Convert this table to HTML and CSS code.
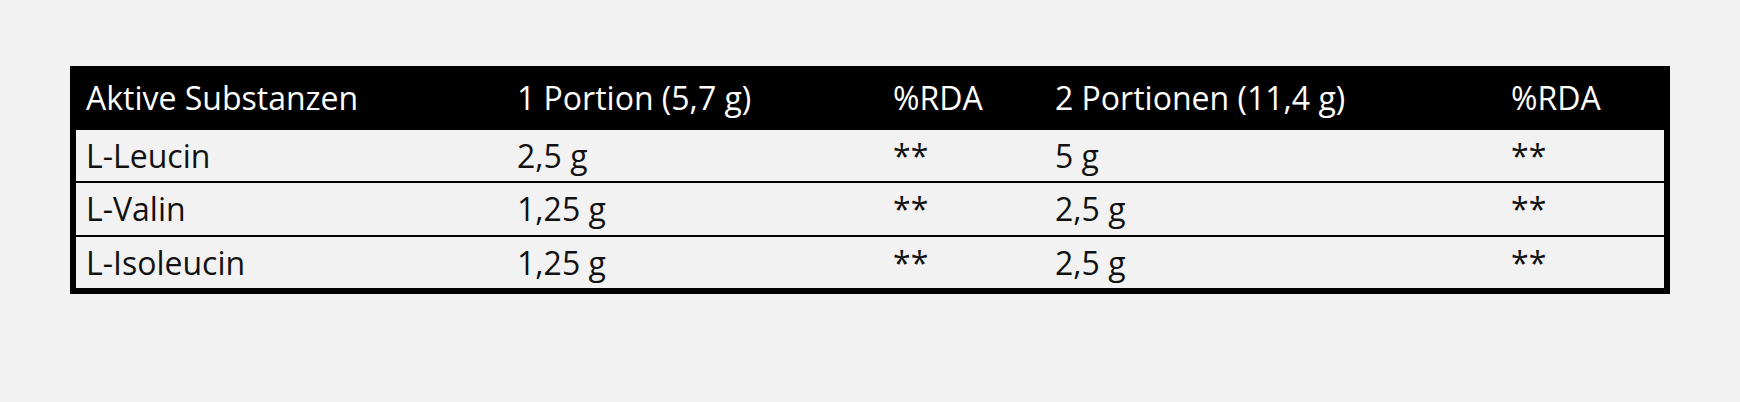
FILE: index.html
```html
<!DOCTYPE html>
<html lang="de">
<head>
<meta charset="utf-8">
<title>Aktive Substanzen</title>
<link rel="stylesheet" href="styles.css">
</head>
<body>
<div class="page">
  <table class="nutri">
    <colgroup>
      <col class="c1"><col class="c2"><col class="c3"><col class="c4"><col class="c5">
    </colgroup>
    <thead>
      <tr>
        <th>Aktive Substanzen</th>
        <th>1 Portion (5,7 g)</th>
        <th>%RDA</th>
        <th>2 Portionen (11,4 g)</th>
        <th>%RDA</th>
      </tr>
    </thead>
    <tbody>
      <tr><td>L-Leucin</td><td>2,5 g</td><td>**</td><td>5 g</td><td>**</td></tr>
      <tr><td>L-Valin</td><td>1,25 g</td><td>**</td><td>2,5 g</td><td>**</td></tr>
      <tr><td>L-Isoleucin</td><td>1,25 g</td><td>**</td><td>2,5 g</td><td>**</td></tr>
    </tbody>
  </table>
</div>
</body>
</html>
```

FILE: styles.css
```css
html, body {
  margin: 0;
  padding: 0;
  background: #f2f2f2;
}

.page {
  padding: 66px 70px;
}

.nutri {
  width: 1600px;
  table-layout: fixed;
  border-collapse: separate;
  border-spacing: 0;
  border: 6px solid #000;
  background: #f2f2f2;
  font-family: "Open Sans", "Liberation Sans", sans-serif;
  font-size: 32px;
  line-height: 1.362;
}

.c1 { width: 431px; }
.c2 { width: 376px; }
.c3 { width: 162px; }
.c4 { width: 456px; }
.c5 { width: 163px; }

.nutri th {
  background: #000;
  color: #fff;
  font-weight: 400;
  text-align: left;
  padding: 4px 10px 10px;
  white-space: nowrap;
}

.nutri td {
  color: #111;
  text-align: left;
  padding: 4px 10px 4px;
  white-space: nowrap;
}

.nutri tbody tr + tr td {
  border-top: 2px solid #000;
}
```
